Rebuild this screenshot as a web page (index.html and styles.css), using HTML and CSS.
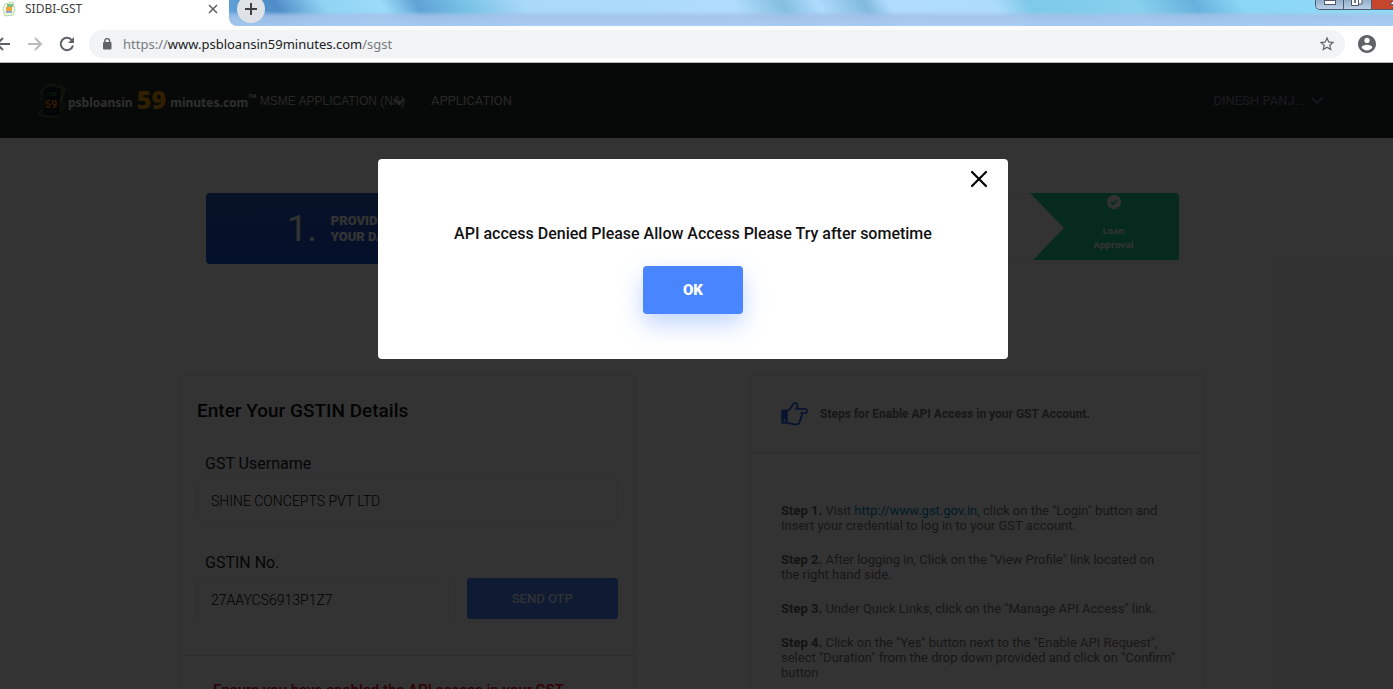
FILE: index.html
```html
<!DOCTYPE html>
<html lang="en">
<head>
<meta charset="utf-8">
<title>SIDBI-GST</title>
<link rel="stylesheet" href="styles.css">
</head>
<body>
<div class="browser">
  <div class="tabstrip">
    <div class="tab">
      <svg class="favicon" viewBox="0 0 16 16" width="16" height="16" aria-hidden="true">
        <path d="M4 3l8-2 2 8-2 5-8 1-2-7z" fill="#f2f8ea" stroke="#b5d99c"/>
        <rect x="6" y="3" width="6" height="3" fill="#7fbf8a"/>
        <rect x="5" y="6" width="6" height="4" fill="#f2a53a"/>
        <rect x="5" y="10" width="6" height="2" fill="#8fa9d0"/>
      </svg>
      <span class="tab-title">SIDBI-GST</span>
      <button class="tab-close" aria-label="Close tab">
        <svg viewBox="0 0 10 10" width="10" height="10"><path d="M1 1l8 8M9 1l-8 8" stroke="#5f6368" stroke-width="1.6"/></svg>
      </button>
    </div>
    <div class="aero">
      <button class="new-tab" aria-label="New tab">
        <svg viewBox="0 0 12 12" width="12" height="12"><path d="M6 0v12M0 6h12" stroke="#3c4043" stroke-width="2"/></svg>
      </button>
      <div class="window-buttons">
        <button class="win" aria-label="Minimize"><svg viewBox="0 0 28 9" width="28" height="9"><rect x="8.500" y="0.500" width="11" height="4" fill="#fff" stroke="#535666"/></svg></button>
        <button class="win" aria-label="Restore"><svg viewBox="0 0 28 9" width="28" height="9"><path d="M11 -2h7v6h-3" fill="#fff" stroke="#535666"/><path d="M7.500 -2h7v7.500h-7z" fill="#fff" stroke="#535666"/><rect x="10" y="-1" width="2" height="4" fill="#68788f"/></svg></button>
        <button class="win win-close" aria-label="Close"><svg viewBox="0 0 28 9" width="28" height="9"><path d="M18 4.500l4-5h6l-2 5z" fill="#fff" stroke="#535666"/></svg></button>
      </div>
    </div>
  </div>

  <div class="toolbar">
    <div class="nav-buttons">
      <button aria-label="Back"><svg viewBox="0 0 16 16" width="16" height="16"><path d="M15 8H2M8 2L2 8l6 6" fill="none" stroke="#5f6368" stroke-width="2"/></svg></button>
      <button aria-label="Forward"><svg viewBox="0 0 16 16" width="16" height="16"><path d="M1 8h13M8 2l6 6-6 6" fill="none" stroke="#babcbe" stroke-width="2"/></svg></button>
      <button aria-label="Reload"><svg viewBox="0 0 16 16" width="16" height="16"><path d="M13.200 4.600A6.200 6.200 0 1 0 14 9.500" fill="none" stroke="#5f6368" stroke-width="2"/><path d="M15 1v6H9z" fill="#5f6368"/></svg></button>
    </div>
    <div class="omnibox">
      <svg viewBox="0 0 10 12" width="10" height="12" aria-hidden="true"><rect x="1" y="4" width="8.500" height="7.500" rx="1" fill="#5f6368"/><path d="M2.800 5V3a2.400 2.400 0 0 1 4.800 0v2" fill="none" stroke="#5f6368" stroke-width="1.400"/></svg>
      <span class="url">https://<span class="host">www.psbloansin59minutes.com</span>/sgst</span>
      <button class="star" aria-label="Bookmark this page"><svg viewBox="0 0 24 24" width="18" height="18"><path d="M22 9.240l-7.190-.62L12 2 9.190 8.630 2 9.240l5.460 4.730L5.820 21 12 17.270 18.180 21l-1.630-7.030L22 9.240zM12 15.400l-3.760 2.270 1-4.280-3.320-2.880 4.380-.38L12 6.100l1.710 4.040 4.380.38-3.320 2.880 1 4.280L12 15.400z" fill="#5f6368"/></svg></button>
    </div>
    <button class="profile" aria-label="Profile"><svg viewBox="2 2 20 20" width="18" height="18"><path d="M12 2C6.480 2 2 6.480 2 12s4.480 10 10 10 10-4.480 10-10S17.520 2 12 2zm0 3c1.660 0 3 1.340 3 3s-1.340 3-3 3-3-1.340-3-3 1.340-3 3-3zm0 14.200c-2.500 0-4.710-1.280-6-3.220.03-1.990 4-3.080 6-3.080 1.990 0 5.970 1.090 6 3.080-1.290 1.940-3.500 3.220-6 3.220z" fill="#5f6368"/></svg></button>
  </div>
</div>

<div class="viewport">
  <header class="site-header">
    <a class="brand" href="#">
      <svg class="brand-mark" viewBox="0 0 30 36" width="30" height="36" aria-hidden="true">
        <path d="M7 4l12-3M4 9l4-6M6 26L1 31l15 4" fill="none" stroke="#5c7a3c"/>
        <path d="M11 1l17 5-4 13M21 2l5 1-5 31-6-1" fill="none" stroke="#5c7a3c"/>
        <path d="M3 9l4-3M2 13l4-3M3 17l3-2M25 19l3 3M25 24l3-2M24 27l3-2" stroke="#5c7a3c" stroke-width="2" stroke-dasharray="1 1"/>
        <path d="M9 5h14l-1 27H7z" fill="#10141c"/>
        <text x="15" y="13" class="mark-top">PSB</text>
        <text x="14" y="25" class="mark-num">59</text>
        <path d="M12 29h7" stroke="#2b3a66"/>
      </svg>
      <span class="brand-text">psbloansin <b>59</b> minutes.com<sup>™</sup></span>
    </a>
    <nav class="main-nav">
      <button class="nav-item nav-select">MSME APPLICATION (NA)<svg class="nav-chevron" viewBox="0 0 12 8" width="12" height="8"><path d="M1 1l5 5 5-5" fill="none" stroke="currentColor" stroke-width="2"/></svg></button>
      <a class="nav-item nav-app" href="#">APPLICATION</a>
    </nav>
    <button class="user">DINESH PANJ...<svg viewBox="0 0 12 8" width="12" height="8"><path d="M1 1l5 5 5-5" fill="none" stroke="currentColor" stroke-width="1.400"/></svg></button>
  </header>

  <main class="container">
    <div class="stepper">
      <div class="step step-current">
        <span class="step-number">1.</span>
        <span class="step-label">PROVIDE<br>YOUR DATA</span>
      </div>
      <div class="step step-approval">
        <svg viewBox="0 0 16 16" width="16" height="16" aria-hidden="true"><circle cx="8" cy="8" r="6.500" fill="#fff" stroke="#fff" stroke-width="1.500" stroke-dasharray="2 1.400"/><path d="M5 8l2.300 2.300L11.200 6" fill="none" stroke="#1ecf90" stroke-width="1.800"/></svg>
        <span>Loan<br>Approval</span>
      </div>
    </div>

    <div class="columns">
      <section class="card">
        <form class="gst-form">
          <h2>Enter Your GSTIN Details</h2>
          <label for="user">GST Username</label>
          <input id="user" type="text" value="SHINE CONCEPTS PVT LTD">
          <label for="gstin">GSTIN No.</label>
          <div class="otp-row">
            <input id="gstin" type="text" value="27AAYCS6913P1Z7">
            <button type="button" class="otp">SEND OTP</button>
          </div>
        </form>
        <p class="notice">Ensure you have enabled the API access in your GST</p>
      </section>

      <section class="card">
        <div class="guide-head">
          <svg viewBox="0 0 27 24" width="27" height="24" aria-hidden="true"><path d="M1 8.500h5v12.500H1z" fill="#2b67e8" stroke="#2b67e8" stroke-width="1.600" stroke-linejoin="round"/><circle cx="3.500" cy="18.500" r="1" fill="#fff"/><path d="M6.500 8.500c2-.3 3.500-2.500 4.700-4.700.8-1.600 1.500-2.800 3-2.800 2.300 0 2.900 2 2 4l-.9 1.900h8.700c2.600 0 2.600 4.200 0 4.200h-3.500c1 1.500.5 3-.5 3.600.5 1.500 0 2.800-1 3.400.2 2.600-1.500 4.400-4.500 4.400-3.500 0-5-1.500-8-1.500" fill="none" stroke="#2b67e8" stroke-width="1.800"/></svg>
          <h3>Steps for Enable API Access in your GST Account.</h3>
        </div>
        <div class="steps">
          <p><b>Step 1.</b> Visit <a href="#">http://www.gst.gov.in</a>, click on the "Login" button and Insert your credential to log in to your GST account.</p>
          <p><b>Step 2.</b> After logging in, Click on the "View Profile" link located on<br>the right hand side.</p>
          <p><b>Step 3.</b> Under Quick Links, click on the "Manage API Access" link.</p>
          <p><b>Step 4.</b> Click on the "Yes" button next to the "Enable API Request", select "Duration" from the drop down provided and click on "Confirm" button</p>
        </div>
      </section>
    </div>
  </main>

  <div class="overlay">
    <div class="modal" role="dialog" aria-modal="true" aria-labelledby="message">
      <button class="modal-close" aria-label="Close"><svg viewBox="0 0 18 18" width="18" height="18"><path d="M2 2l14 14M16 2L2 16" stroke="#000" stroke-width="2.200" stroke-linecap="round"/></svg></button>
      <p id="message">API access Denied Please Allow Access Please Try after sometime</p>
      <button class="ok">OK</button>
    </div>
  </div>
</div>
</body>
</html>
```
FILE: styles.css
```css
* { box-sizing: border-box; }
body {
  margin: 0;
  height: 100vh;
  overflow: hidden;
  display: flex;
  flex-direction: column;
  font-family: Roboto, "Liberation Sans", sans-serif;
}
button { padding: 0; border: 0; background: none; font: inherit; color: inherit; }
button svg { display: block; }
p, h2, h3 { margin: 0; }
a { text-decoration: none; color: inherit; }

/* Browser chrome */
.browser { flex: none; background: #fff; border-bottom: 1px solid #b6b4b6; }
.tabstrip { display: flex; height: 26px; overflow: hidden; }
.tab {
  flex: none;
  display: flex;
  align-items: center;
  width: 229px;
  height: 18px;
  padding: 0 11px 0 1px;
}
.favicon { flex: none; }
.tab-title { flex: 1; padding-left: 8px; font: 12px/16px "Noto Sans", sans-serif; color: #3c4043; }
.aero {
  flex: 1;
  display: flex;
  justify-content: space-between;
  align-items: flex-start;
  border-bottom-left-radius: 8px;
  background:
    linear-gradient(to bottom, rgba(168, 199, 238, 0) 11px, rgba(164, 194, 232, 0.85) 16px, rgba(170, 203, 240, 0.9) 26px),
    linear-gradient(60deg, #62a5dc 0%, #4f8cc8 5%, #8fd3f3 9%, #9cdcf9 14%, #5fa3d6 17%, #78c2e6 21%, #a9d8f8 26%, #b0dbfc 44%, #83bfdf 48%, #b0dbfc 51%, #80bade 55%, #b0dbfc 57%, #aedbfb 66%, #7cc9e8 69%, #88d0ee 78%, #67b2dd 83%, #8ad6f5 87%, #93dbf8 100%);
}
.new-tab {
  display: grid;
  place-items: center;
  width: 28px;
  height: 28px;
  margin: -5px 0 0 8px;
  border-radius: 50%;
  background: #dee1e6;
}
.window-buttons { display: flex; width: 78px; overflow: hidden; border: 1px solid #4e5a6c; border-width: 0 0 1px 1px; border-bottom-left-radius: 5px; }
.win { flex: none; width: 28px; height: 9px; overflow: hidden; background: linear-gradient(#93afca, #b9d0e6); border-right: 1px solid #4e5a6c; }
.win-close { background: #c6452d; }
.toolbar { display: flex; align-items: center; height: 36px; padding-right: 17px; }
.nav-buttons { display: flex; gap: 16px; margin-left: -5px; }
.omnibox {
  flex: 1;
  display: flex;
  align-items: center;
  height: 28px;
  margin: 0 13px 0 14px;
  padding: 0 9px 0 13px;
  border-radius: 14px;
  background: #f1f3f4;
}
.url { flex: 1; padding-left: 11px; font: 13px/18px "Noto Sans", sans-serif; color: #777b80; }
.host { color: #202124; }

/* Page */
.viewport { position: relative; flex: 1; min-height: 0; overflow: hidden; background: #fcfcfc; }
.site-header {
  display: flex;
  align-items: center;
  height: 75px;
  padding: 0 70px 0 37px;
  background: #242d28;
  color: #c4c4c4;
  font-size: 13px;
}
.brand { display: flex; align-items: center; color: #e6e6e6; }
.brand-text { padding-left: 1px; font: bold 12px/24px "Noto Sans", sans-serif; white-space: nowrap; }
.brand-text b { margin: 0 1px; font-size: 25px; font-weight: 900; color: #f59a0b; vertical-align: -2px; }
.brand-text sup { font-size: 11px; line-height: 0; }
.mark-top { font: bold 5px Roboto, sans-serif; fill: #1a8c3a; text-anchor: middle; }
.mark-num { font: bold 11px Roboto, sans-serif; fill: #f5820b; text-anchor: middle; }
.main-nav { display: flex; align-items: center; margin-left: 3px; }
.nav-item { line-height: 16px; white-space: nowrap; }
.nav-select { position: relative; font-family: "Liberation Sans", sans-serif; font-size: 12px; }
.nav-chevron { position: absolute; right: 0; top: 5px; }
.nav-app { margin-left: 15px; padding-left: 10px; border-left: 1px solid #353f3a; }
.user { display: flex; align-items: center; gap: 6px; margin-left: auto; color: #83839c; }
.container { max-width: 1033px; margin: 0 auto; padding: 55px 8px 0 0; }
.stepper {
  display: flex;
  justify-content: space-between;
  height: 71px;
  margin: 0 26px;
  border: 1px solid #ededed;
  border-radius: 4px;
}
.step-current {
  display: flex;
  align-items: center;
  gap: 14px;
  width: 31%;
  margin: -1px;
  padding-left: 81px;
  border-radius: 4px;
  background: linear-gradient(#2a5abf, #1655d4);
  color: #fff;
}
.step-number { font-size: 36px; }
.step-label { font-size: 13px; line-height: 16px; font-weight: 900; }
.step-approval {
  display: flex;
  flex-direction: column;
  align-items: center;
  gap: 14px;
  width: 149px;
  height: 67px;
  margin: -1px -1px 0 0;
  padding: 1px 0 0 18px;
  border-top-right-radius: 4px;
  background: #1ecf90;
  clip-path: polygon(0 0, 100% 0, 100% 100%, 3px 100%, 34px 35px);
  color: #fff;
  font: bold 9px/14px "Noto Sans", sans-serif;
  text-align: center;
}
.columns { display: grid; grid-template-columns: 1fr 1fr; gap: 115px; margin-top: 110px; }
.card { border: 1px solid #ebebeb; border-radius: 4px; }
.gst-form { padding: 24px 16px 34px; border-bottom: 1px solid #e6e6e6; color: #111; }
.gst-form h2 { font-size: 19px; line-height: 24px; font-weight: 500; }
.gst-form label { display: block; padding: 31px 8px 5px; font-size: 16px; line-height: 20px; color: #222; }
.gst-form input {
  width: 100%;
  height: 43px;
  padding: 0 13px;
  border: 1px solid #ededed;
  border-radius: 4px;
  background: none;
  font: 300 14px/20px Roboto, sans-serif;
  color: #000;
}
.otp-row { display: grid; grid-template-columns: 5fr 3fr; gap: 17px; align-items: start; }
.otp { height: 41px; border-radius: 3px; background: #4a83ff; color: #eef2ff; font-size: 13px; font-weight: 500; }
.notice { padding: 24px 32px; font-size: 15px; line-height: 20px; font-weight: 500; color: #e8001c; white-space: nowrap; }
.guide-head { display: flex; align-items: center; gap: 12px; height: 79px; padding-left: 30px; border-bottom: 1px solid #e6e6e6; }
.guide-head h3 { font-size: 12px; line-height: 16px; font-weight: 700; color: #777; }
.steps { display: grid; gap: 19px; padding: 49px 28px 49px 30px; font-size: 13px; line-height: 15px; color: #777; }
.steps b { color: #666; }
.steps a { color: #0088cc; }

/* Dialog */
.overlay {
  position: absolute;
  inset: 0;
  display: flex;
  justify-content: center;
  align-items: flex-start;
  padding: 96px 7px 0 0;
  background: rgba(0, 0, 0, 0.8);
}
.modal {
  display: flex;
  flex-direction: column;
  align-items: center;
  width: 630px;
  padding: 11px 20px 45px;
  border-radius: 4px;
  background: #fff;
}
.modal-close { align-self: flex-end; }
.modal p { padding: 34px 0 20px; font-size: 16px; line-height: 24px; font-weight: 500; color: #111; }
.ok {
  width: 100px;
  height: 48px;
  border-radius: 4px;
  background: #4885ff;
  box-shadow: 0 10px 24px rgba(72, 133, 255, 0.35);
  color: #fff;
  font-size: 15px;
  font-weight: 900;
}
```
